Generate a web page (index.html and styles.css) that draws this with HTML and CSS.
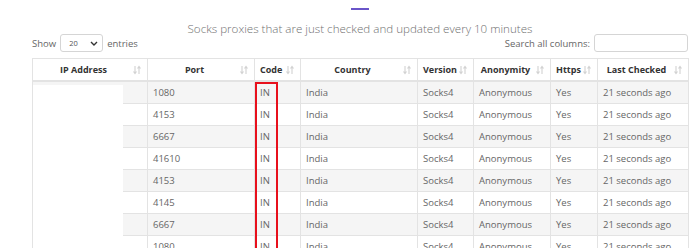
FILE: index.html
```html
<!DOCTYPE html>
<html lang="en">

<head>
    <meta charset="UTF-8">
    <meta name="viewport" content="width=device-width, initial-scale=1.0">
    <title>Socks Proxy List</title>
    <link rel="stylesheet" href="styles.css">
</head>

<body>
    <div class="page">
        <div class="title-bar"></div>
        <p class="subtitle">Socks proxies that are just checked and updated every 10 minutes</p>

        <!-- Table controls -->
        <div class="controls">
            <label class="length">Show
                <span class="select">20
                    <svg width="8" height="5" viewBox="0 0 8 5"><path d="M1 1l3 3 3-3" fill="none" stroke="#333" stroke-width="1.4"/></svg>
                </span>
                entries</label>
            <label class="search">Search all columns: <span class="search-box"></span></label>
        </div>

        <div class="table-wrap">
            <table class="proxy-table">
                <colgroup>
                    <col style="width:115px">
                    <col style="width:107px">
                    <col style="width:46px">
                    <col style="width:117px">
                    <col style="width:56px">
                    <col style="width:77px">
                    <col style="width:47px">
                    <col style="width:91px">
                </colgroup>
                <thead>
                    <tr id="headRow"></tr>
                </thead>
                <tbody id="rows"></tbody>
            </table>
            <!-- redacted IP addresses -->
            <div class="redact"></div>
            <!-- highlight around country code -->
            <div class="highlight"></div>
        </div>
    </div>

    <script>
        const headers = [
            ["IP Address", "center"], ["Port", "center"], ["Code", "left"], ["Country", "center"],
            ["Version", "left"], ["Anonymity", "center"], ["Https", "left"], ["Last Checked", "center"]
        ];
        const ports = [1080, 4153, 6667, 41610, 4153, 4145, 6667, 1080];
        const sortIcon = '<svg class="sort" width="8" height="10" viewBox="0 0 8 10"><path d="M2 1v7.5M0.5 6.5l1.5 2 1.5-2M6 9V1.5M4.5 3.5l1.5-2 1.5 2" fill="none" stroke="#d2d2d2" stroke-width="1.1"/></svg>';

        const headRow = document.getElementById("headRow");
        headers.forEach(([name, align]) => {
            const th = document.createElement("th");
            th.className = align;
            th.innerHTML = `<span>${name}</span>${sortIcon}`;
            headRow.appendChild(th);
        });

        const tbody = document.getElementById("rows");
        ports.forEach(port => {
            const tr = document.createElement("tr");
            ["", port, "IN", "India", "Socks4", "Anonymous", "Yes", "21 seconds ago"].forEach(value => {
                const td = document.createElement("td");
                td.textContent = value;
                tr.appendChild(td);
            });
            tbody.appendChild(tr);
        });
    </script>
</body>

</html>
```

FILE: styles.css
```css
body {
    margin: 0;
    font-family: 'Open Sans', sans-serif;
    color: #666;
    background-color: #ffffff;
    overflow: hidden;
}

.page {
    width: 656px;
    margin: 0 12px 0 32px;
}

.title-bar {
    width: 18px;
    height: 2px;
    margin: 8px 0 0 319px;
    background-color: #6a55c9;
}

.subtitle {
    margin: 12px 0 0;
    text-align: center;
    font-size: 11.6px;
    font-weight: 300;
    color: #6f6f6f;
    line-height: 14px;
}

.controls {
    display: flex;
    justify-content: space-between;
    align-items: center;
    height: 18px;
    margin-top: -2px;
    font-size: 9.5px;
}

.controls label {
    display: flex;
    align-items: center;
    gap: 4px;
}

.select {
    display: flex;
    align-items: center;
    justify-content: space-between;
    box-sizing: border-box;
    width: 43px;
    height: 18px;
    padding: 0 4px 0 8px;
    border: 1px solid #d5d5d5;
    border-radius: 3px;
    font-size: 7.5px;
    color: #555;
}

.search-box {
    display: block;
    box-sizing: border-box;
    width: 94px;
    height: 18px;
    border: 1px solid #d5d5d5;
    border-radius: 3px;
}

.table-wrap {
    position: relative;
    margin-top: 6px;
}

.proxy-table {
    width: 656px;
    table-layout: fixed;
    border-collapse: collapse;
    font-size: 9.5px;
}

.proxy-table th,
.proxy-table td {
    border: 1px solid #e3e3e3;
    white-space: nowrap;
    overflow: hidden;
}

.proxy-table th {
    position: relative;
    height: 21px;
    padding: 0 18px 0 5px;
    color: #333;
    font-size: 9px;
    font-weight: 700;
    border-bottom: 2px solid #e3e3e3;
}

.proxy-table th.left {
    text-align: left;
}

.proxy-table th.center {
    text-align: center;
}

.proxy-table th .sort {
    position: absolute;
    right: 6px;
    top: 6px;
}

.proxy-table td {
    height: 21px;
    padding: 0 5px;
    text-align: left;
}

.proxy-table tbody tr:nth-child(odd) {
    background-color: #f5f5f5;
}

.redact {
    position: absolute;
    left: 1px;
    top: 27px;
    width: 90px;
    height: 200px;
    background-color: #ffffff;
}

.highlight {
    position: absolute;
    left: 223px;
    top: 24px;
    width: 23px;
    height: 200px;
    box-sizing: border-box;
    border: 2px solid #e8101c;
}
```
